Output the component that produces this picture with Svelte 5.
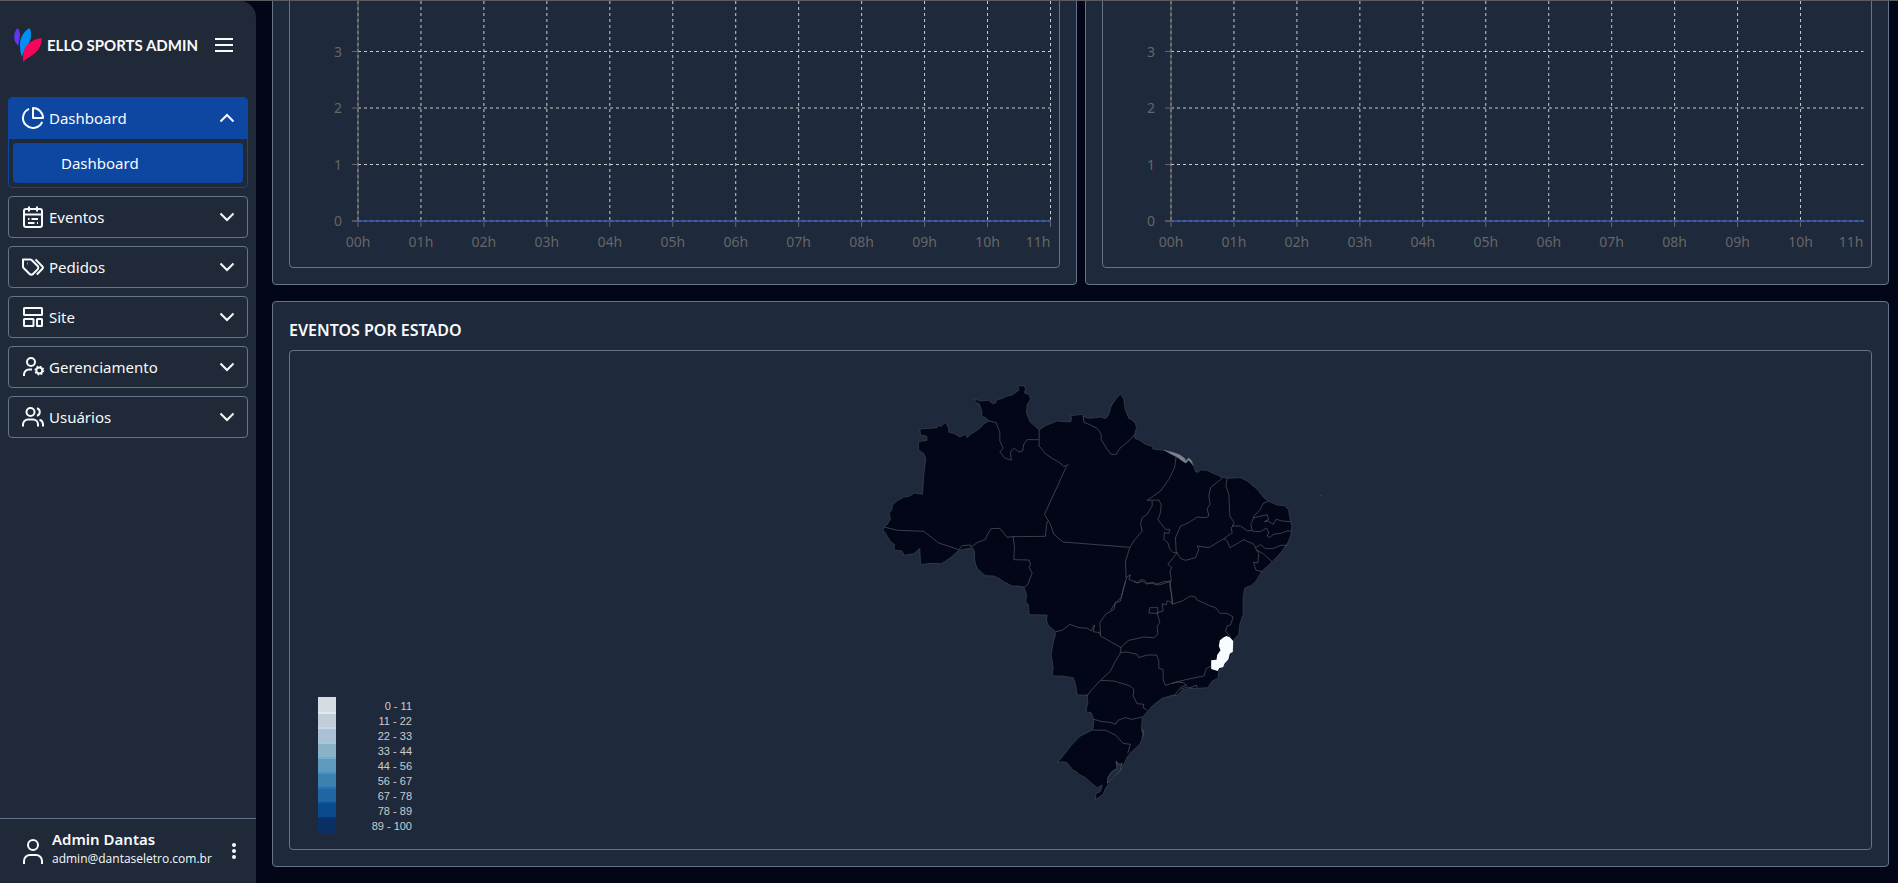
<script>
  const hours = Array.from({ length: 12 }, (_, i) => `${String(i).padStart(2, '0')}h`);
  const levels = [4, 3, 2, 1, 0];
  const plotHeight = 226;
  const charts = [
    { id: 'left', closed: true },
    { id: 'right', closed: false }
  ];

  const legend = [
    ['0 - 11', '#f7fbff'],
    ['11 - 22', '#deebf7'],
    ['22 - 33', '#c6dbef'],
    ['33 - 44', '#9ecae1'],
    ['44 - 56', '#6baed6'],
    ['56 - 67', '#4292c6'],
    ['67 - 78', '#2171b5'],
    ['78 - 89', '#08519c'],
    ['89 - 100', '#08306b']
  ];

  const menu = [
    { label: 'Eventos', icon: 'calendar' },
    { label: 'Pedidos', icon: 'tags' },
    { label: 'Site', icon: 'layout' },
    { label: 'Gerenciamento', icon: 'usercog' },
    { label: 'Usuários', icon: 'users' }
  ];

  // The map is drawn in three sectors, each with its own origin.
  const sectors = {
    west: [0, 0],
    east: [630, 0],
    south: [390, 630]
  };

  const coast = [
    ['west', '38,478 40,466 48,463 60,445 56,428 64,415 66,402 82,388 98,379 118,375 132,366 145,368 156,370 160,310 166,262 160,248 144,236 144,212 170,208 168,195 150,192 148,174 180,172 200,170 203,164 212,166 225,154 234,170 235,184 250,187 268,198 285,190 290,200 300,190 320,178 332,168 340,158 356,150 345,140 334,136 334,120 326,98 318,95 308,83 330,90 354,88 366,98 376,95 378,88 400,80 410,75 425,72 445,58 442,45 460,44 465,52 462,66 476,70 480,86 470,100 468,125 478,152 506,177 525,164 560,150 600,153 604,143 600,134 636,130'],
    ['east', '10,138 25,142 45,140 60,138 75,143 84,132 92,105 108,82 120,68 130,85 134,115 145,142 154,146 165,158 168,170 163,188 163,202 178,208 195,220 215,226 217,234 250,238 275,245 290,252 310,265 316,271 325,262 335,272 340,285 345,302 353,304 360,297 380,298 400,308 425,318 440,322 480,320 500,330 530,355 550,380 562,390 590,402 612,404 624,416 628,440 634,465 632,490 622,515 605,540 578,570 545,600 525,632 510,645 494,650'],
    ['south', '732,25 728,50 728,100 718,130 715,160 700,176 697,210 688,235 675,250 655,270 652,292 635,300 622,320 590,322 565,322 545,328 530,342 515,343 485,352 455,375 438,395 425,410 423,445 428,465 418,490 398,508 382,525 372,545 360,570 345,590 325,608 315,622 308,640 285,656 286,638 300,632 305,612 290,620 275,608 255,590 235,580 225,570 218,568 200,545 185,542 170,545 185,528 215,490 240,465 275,447 278,440 280,415 272,395 256,392 262,365 260,342 230,342 225,310 218,290 185,285 155,285 158,260 152,220 158,185 165,160 163,150 145,135 138,120 140,102 86,101 83,70 76,65 78,40 70,18'],
    ['west', '445,645 425,645 400,632 385,622 370,615 345,614 322,595 315,580 312,560 312,540 305,530 285,534 265,538 240,560 225,570 212,578 180,577 160,580 150,580 148,532 130,548 100,553 95,540 70,537 72,520 60,512 45,487']
  ];

  const outline = coast
    .flatMap(([sector, points]) =>
      points.split(' ').map((pair) => {
        const [x, y] = pair.split(',').map(Number);
        return `${x + sectors[sector][0]},${y + sectors[sector][1]}`;
      })
    )
    .join(' ');

  const borders = [
    ['west', '40,468 82,478 160,481 205,516 265,536'],
    ['west', '265,536 275,524 300,522 302,528 320,515 345,505 350,492 362,473 388,472 410,499 425,497 525,496 528,460 532,450'],
    ['west', '428,497 432,530 430,566 475,567 480,580 476,590 485,606 472,640 460,650'],
    ['west', '356,150 378,155 380,165 388,182 388,210 398,232 388,243 402,260 422,268 420,245 426,235 432,232 445,243 456,240 460,220 470,206 505,206'],
    ['west', '506,177 506,225 525,248 545,262 565,273 580,286 595,281'],
    ['west', '588,286 522,430 540,460 550,490 578,513 778,529'],
    ['east', '8,135 10,153 30,162 50,172 62,190 62,205 80,235 92,250 107,250 118,232 150,205 163,190'],
    ['east', '287,258 282,290 265,325 240,360 200,388 235,387 242,400 240,425 232,445 255,475 268,475 265,487 252,485 250,505 262,515 268,535 278,545 290,545'],
    ['east', '215,390 215,405 200,430 185,440 180,460 185,480 160,510 148,530 135,570 137,625 128,655 120,690 105,695 90,718'],
    ['south', '375,0 362,50 345,65 340,85 315,100 298,125 300,160'],
    ['east', '137,620 150,611 145,625 172,636 180,626 192,627 200,637 215,635 225,642 235,637 250,632 272,630'],
    ['east', '290,545 262,580 274,590 268,600 272,625 268,645 273,670 275,700'],
    ['east', '425,318 420,326 390,350 385,375 389,400 380,412 385,435 375,440 350,438 325,455 300,465 285,500 287,545'],
    ['east', '290,545 300,562 315,568 345,560 355,535 350,525 385,530 410,515 430,503 455,485 452,470 458,465'],
    ['east', '440,322 436,345 445,370 448,435 461,455 455,465 480,465 500,480 515,478'],
    ['east', '562,392 548,397 540,415 520,435 518,445 511,460 515,478'],
    ['east', '520,440 535,437 560,431 564,445 552,452 563,450 578,460 587,445 605,450 630,452'],
    ['east', '515,480 540,482 558,471 565,485 560,495 565,500 580,490 600,487 620,480 632,480'],
    ['east', '430,503 440,510 448,530 470,518 490,506 520,520 528,537'],
    ['east', '525,530 540,521 555,533 580,532 600,523 620,523'],
    ['east', '528,537 548,548 575,572'],
    ['east', '528,537 535,548 532,575 519,574 526,597 545,602'],
    ['south', '515,70 545,60 570,45 585,48 590,57 625,73 645,80 658,97 680,97 698,108 690,132 680,135 675,150 690,168'],
    ['south', '400,0 412,6 425,0 438,9 460,5 475,12 508,2 513,40 517,68 505,60 500,60 497,72 485,68 488,90 470,95 478,125 470,135 472,160 460,170 430,168 385,178 370,190 362,200'],
    ['south', '448,80 472,80 472,97 445,96 448,80'],
    ['south', '165,152 185,148 208,130 235,140 262,142 272,150 282,132 278,152 298,155 300,165 362,200'],
    ['south', '362,200 358,220 345,240 330,270 300,298 270,330 260,345'],
    ['south', '360,215 378,213 410,220 415,230 440,222 468,222 475,240 475,262 488,266 488,296 495,313 520,305 560,295 610,285 618,262 633,255'],
    ['south', '515,307 530,303 548,305 558,312 540,320 520,345'],
    ['south', '540,325 560,318 570,320 588,312 590,320'],
    ['south', '300,298 340,300 390,315 400,325 398,345 410,368 430,370 428,380 440,388'],
    ['south', '280,415 305,422 330,424 345,430 352,418 375,410 395,415 425,408'],
    ['south', '275,447 315,448 345,462 368,487 390,490 385,505 382,516'],
    ['south', '427,445 430,458 424,470']
  ];

  const shift = (sector) => `translate(${sectors[sector].join(' ')})`;
</script>

{#snippet chevron(up)}
  <svg class="chevron" viewBox="0 0 16 16" aria-hidden="true">
    <path d={up ? 'M1.5 11.5 8 5l6.5 6.5' : 'M1.5 4.5 8 11l6.5-6.5'} />
  </svg>
{/snippet}

{#snippet icon(name)}
  <svg class="icon" viewBox="0 0 24 24" aria-hidden="true">
    {#if name === 'pie'}
      <path d="M21.2 15.9A10 10 0 1 1 8 2.8" />
      <path d="M12 2a10 10 0 0 1 10 10H12z" />
    {:else if name === 'calendar'}
      <rect x="3" y="4" width="18" height="18" rx="2" />
      <path d="M8 1.5v5M16 1.5v5M3 9.5h18M7 14h1.5M10.5 14H17M7 18h6.500M16 18h1" />
    {:else if name === 'tags'}
      <path d="M2 5v6.600a2 2 0 0 0 .6 1.400l6 6a2.400 2.400 0 0 0 3.400 0l4.600-4.600a2.400 2.400 0 0 0 0-3.400l-6-6A2 2 0 0 0 9.200 4.400H2z" />
      <path d="m14.500 4.400 6.700 6.800a2 2 0 0 1 0 2.800l-5.400 5.500" />
      <path d="M6 8.500h.5" />
    {:else if name === 'layout'}
      <rect x="3" y="3" width="18" height="7" rx="0.500" />
      <rect x="3" y="14" width="9.500" height="7" rx="0.500" />
      <rect x="16" y="14" width="5" height="7" rx="0.500" />
    {:else if name === 'usercog'}
      <circle cx="10" cy="7" r="4" />
      <path d="M3 21v-1.500a5 5 0 0 1 5-5h3" />
      <circle cx="18.300" cy="15.500" r="3" />
      <circle class="teeth" cx="18.300" cy="15.500" r="4.200" />
    {:else if name === 'users'}
      <circle cx="9.500" cy="7" r="4" />
      <path d="M2 21.500v-2a5 5 0 0 1 5-5h5a5 5 0 0 1 5 5v2M16 3.200a4 4 0 0 1 0 7.600M22 21.500v-2a5 5 0 0 0-3.500-4.700" />
    {/if}
  </svg>
{/snippet}

<div class="app">
  <aside>
    <header class="brand">
      <svg class="logo" viewBox="0 0 28 34" aria-hidden="true">
        <path fill="#6236ee" d="M3.500 0C.500 3.500-.500 8 .500 12c.8 3 2.500 4.500 4 5.500C5 12 7 8 5.500 3.500 5 1.500 4.300.600 3.500 0z" />
        <path fill="#0090f5" d="M15.500 0C9 3.500 5.500 11 6 18.500c.2 5 1 8 2 10.500 1-6 8-13 9-20 .4-4-.2-7-1.500-9z" />
        <path fill="#f4065c" d="M27.500 10C18 11.500 10.500 17 9.500 24.500c-.4 3.500-.5 6.500-.3 9.500 3-4 12-7 15.800-13.500 2.200-3.500 3-7.500 2.500-10.500z" />
      </svg>
      <strong>ELLO SPORTS ADMIN</strong>
      <button class="plain" aria-label="Menu">
        <svg class="burger" viewBox="0 0 18 14" aria-hidden="true"><path d="M0 1h18M0 7h18M0 13h18" /></svg>
      </button>
    </header>

    <nav>
      <div class="group open">
        <button class="item">{@render icon('pie')}<span>Dashboard</span>{@render chevron(true)}</button>
        <div class="sub"><a href="#dashboard">Dashboard</a></div>
      </div>
      {#each menu as entry}
        <div class="group">
          <button class="item">{@render icon(entry.icon)}<span>{entry.label}</span>{@render chevron(false)}</button>
        </div>
      {/each}
    </nav>

    <footer>
      <svg class="avatar" viewBox="0 0 20 25" aria-hidden="true">
        <circle cx="10" cy="6" r="5" />
        <path d="M1 25v-3a6 6 0 0 1 6-6h6a6 6 0 0 1 6 6v3" />
      </svg>
      <div class="who">
        <strong>Admin Dantas</strong>
        <span>admin@dantaseletro.com.br</span>
      </div>
      <button class="plain" aria-label="Mais">
        <svg class="dots" viewBox="0 0 4 16" aria-hidden="true">
          <circle cx="2" cy="2" r="2" /><circle cx="2" cy="8" r="2" /><circle cx="2" cy="14" r="2" />
        </svg>
      </button>
    </footer>
  </aside>

  <main>
    <div class="charts">
      {#each charts as chart (chart.id)}
        <section class="card">
          <div class="panel plot">
            <svg height={plotHeight}>
              {#each levels as level}
                {@const y = plotHeight - level * 56.5}
                <line class="grid" x1="0" x2="100%" y1={y} y2={y} />
              {/each}
              {#each hours as hour, i}
                {#if i < 11 || chart.closed}
                  <line class="grid" x1="{(i * 100) / 11}%" x2="{(i * 100) / 11}%" y1="0" y2={plotHeight} />
                  <line class="axis" x1="{(i * 100) / 11}%" x2="{(i * 100) / 11}%" y1={plotHeight} y2={plotHeight + 6} />
                {/if}
                <text x="{(i * 100) / 11}%" y={plotHeight + 26} text-anchor={i === 11 ? 'end' : 'middle'}>{hour}</text>
              {/each}
              <line class="axis" x1="0" x2="0" y1="0" y2={plotHeight} />
              <line class="axis" x1="-6" x2="100%" y1={plotHeight} y2={plotHeight} />
              {#each levels.slice(1) as level}
                {@const y = plotHeight - level * 56.5}
                <line class="axis" x1="-6" x2="0" y1={y} y2={y} />
                <text x="-16" y={y + 5} text-anchor="end">{level}</text>
              {/each}
              <line class="series" x1="0" x2="100%" y1={plotHeight} y2={plotHeight} />
            </svg>
          </div>
        </section>
      {/each}
    </div>

    <section class="card">
      <h2>EVENTOS POR ESTADO</h2>
      <div class="panel map">
        <svg class="brazil" viewBox="-120 -60 1500 1494" role="img" aria-label="Brasil">
          <polygon class="land" points={outline} />
          {#each borders as [sector, points]}
            <polyline class="border" {points} transform={shift(sector)} />
          {/each}
          <g transform={shift('east')}>
            <path class="reef" d="M250 237l28 7 20 7 14 10 4 8 9-9 9 10 4 14-8-10-6-6-8 9-12-8-14-10-18-9z" />
          </g>
          <g transform={shift('south')}>
            <path class="lagoon" d="M347 540l6 9 12-1-6 20-20 22-18 17 1-17 11-17 17-11z" />
            <path class="active" d="M670 169l8-4 10 4 10 11-1 32-9 6-4 17-12 13-4 10-12 4-4 8-20-6v-26l16-2 2-14 10-14-5-13 3-17z" />
          </g>
          <path class="border" d="M1348 372l5 2" />
        </svg>
        <ul class="legend">
          {#each legend as [label, color]}
            <li><i style:background={color}></i><span>{label}</span></li>
          {/each}
        </ul>
      </div>
    </section>
  </main>
</div>

<style>
  :global(body) {
    background: #020617;
  }
  .app {
    display: flex;
    box-sizing: border-box;
    height: 100vh;
    border-top: 1px solid #5c5c5c;
    overflow: hidden;
    color: #f8fafc;
    font: 15px/24px 'Noto Sans', sans-serif;
  }
  aside {
    display: flex;
    flex-direction: column;
    flex: 0 0 256px;
    border-radius: 0 16px 0 0;
    background: #1f2937;
  }
  svg {
    display: block;
    flex: none;
    fill: none;
    stroke: currentColor;
    stroke-width: 2;
  }
  .brand {
    display: flex;
    align-items: center;
    height: 88px;
    padding: 0 23px 0 14px;
  }
  .brand strong {
    flex: 1;
    margin-left: 5px;
    font: 700 15px/24px Lato, sans-serif;
    white-space: nowrap;
  }
  .logo {
    width: 28px;
    height: 34px;
    stroke: none;
  }
  .burger {
    width: 18px;
    height: 14px;
  }
  button {
    border: 0;
    background: none;
    color: inherit;
    font: inherit;
    cursor: pointer;
  }
  .plain {
    padding: 0;
  }
  nav {
    display: flex;
    flex-direction: column;
    gap: 8px;
    flex: 1;
    padding: 8px;
  }
  .group {
    border: 1px solid #64748b;
    border-radius: 4px;
    overflow: hidden;
  }
  .group.open {
    border-color: #0d47a1;
  }
  .item {
    display: flex;
    align-items: center;
    gap: 4px;
    width: 100%;
    height: 40px;
    padding: 0 12px;
    text-align: left;
  }
  .item span {
    flex: 1;
  }
  .open .item {
    box-sizing: content-box;
    width: auto;
    width: calc(100% - 24px);
    border-bottom: 1px solid #0d47a1;
    background: #0d47a1;
  }
  .icon {
    width: 24px;
    height: 24px;
    stroke-linejoin: round;
  }
  .teeth {
    stroke-width: 1.4;
    stroke-dasharray: 1.65 1.65;
  }
  .chevron {
    width: 16px;
    height: 16px;
  }
  .sub {
    padding: 4px;
  }
  .sub a {
    display: block;
    padding: 8px 48px;
    border-radius: 4px;
    background: #0d47a1;
    color: inherit;
    text-decoration: none;
  }
  footer {
    display: flex;
    align-items: center;
    height: 64px;
    padding: 0 20px 0 23px;
    border-top: 1px solid #64748b;
  }
  .avatar {
    width: 20px;
    height: 25px;
  }
  .who {
    display: flex;
    flex-direction: column;
    flex: 1;
    margin: 0 0 8px 9px;
  }
  .who strong {
    font-weight: 600;
    line-height: 24px;
  }
  .who span {
    font: 12px/16px 'Open Sans', sans-serif;
  }
  .dots {
    width: 4px;
    height: 16px;
    fill: currentColor;
    stroke: none;
  }
  main {
    display: flex;
    flex-direction: column;
    justify-content: flex-end;
    gap: 16px;
    flex: 1;
    min-width: 0;
    padding: 0 9px 16px 16px;
  }
  .charts {
    display: grid;
    grid-template-columns: 1fr 1fr;
    gap: 8px;
  }
  .card {
    padding: 16px;
    border: 1px solid #64748b;
    border-radius: 4px;
    background: #1e293b;
  }
  .panel {
    border: 1px solid #64748b;
    border-radius: 4px;
  }
  .plot {
    padding: 16px 8px 46px 68px;
  }
  .plot svg {
    width: 100%;
    overflow: visible;
    stroke-width: 1;
  }
  .grid {
    stroke: #ccc;
    stroke-dasharray: 3 3;
  }
  .axis {
    stroke: #666;
  }
  .series {
    stroke: #1a4fd0;
  }
  text {
    fill: #666;
    stroke: none;
    font-size: 14px;
  }
  h2 {
    margin: 0 0 8px;
    font-size: 16px;
    font-weight: 600;
    line-height: 24px;
  }
  .map {
    display: grid;
  }
  .map > * {
    grid-area: 1 / 1;
  }
  .brazil {
    width: 100%;
    height: 498px;
    stroke-width: 2;
    stroke-linejoin: round;
  }
  .land {
    fill: #020617;
    stroke: #3f4654;
  }
  .border {
    stroke: #555a68;
  }
  .reef {
    fill: #7d828d;
    stroke: #5d6370;
    stroke-width: 1;
  }
  .lagoon {
    fill: #1e293b;
    stroke: #5d6370;
  }
  .active {
    fill: #f7fbff;
    stroke: none;
  }
  .legend {
    align-self: end;
    justify-self: start;
    margin: 0 0 17px 28px;
    padding: 0;
    list-style: none;
    color: #ccc;
    font: 11px/15px 'Liberation Sans', sans-serif;
  }
  .legend li {
    display: flex;
    justify-content: space-between;
    width: 94px;
    height: 15px;
  }
  .legend i {
    width: 18px;
    height: 17px;
    opacity: 0.85;
  }
  .legend span {
    padding-top: 2px;
  }
</style>
